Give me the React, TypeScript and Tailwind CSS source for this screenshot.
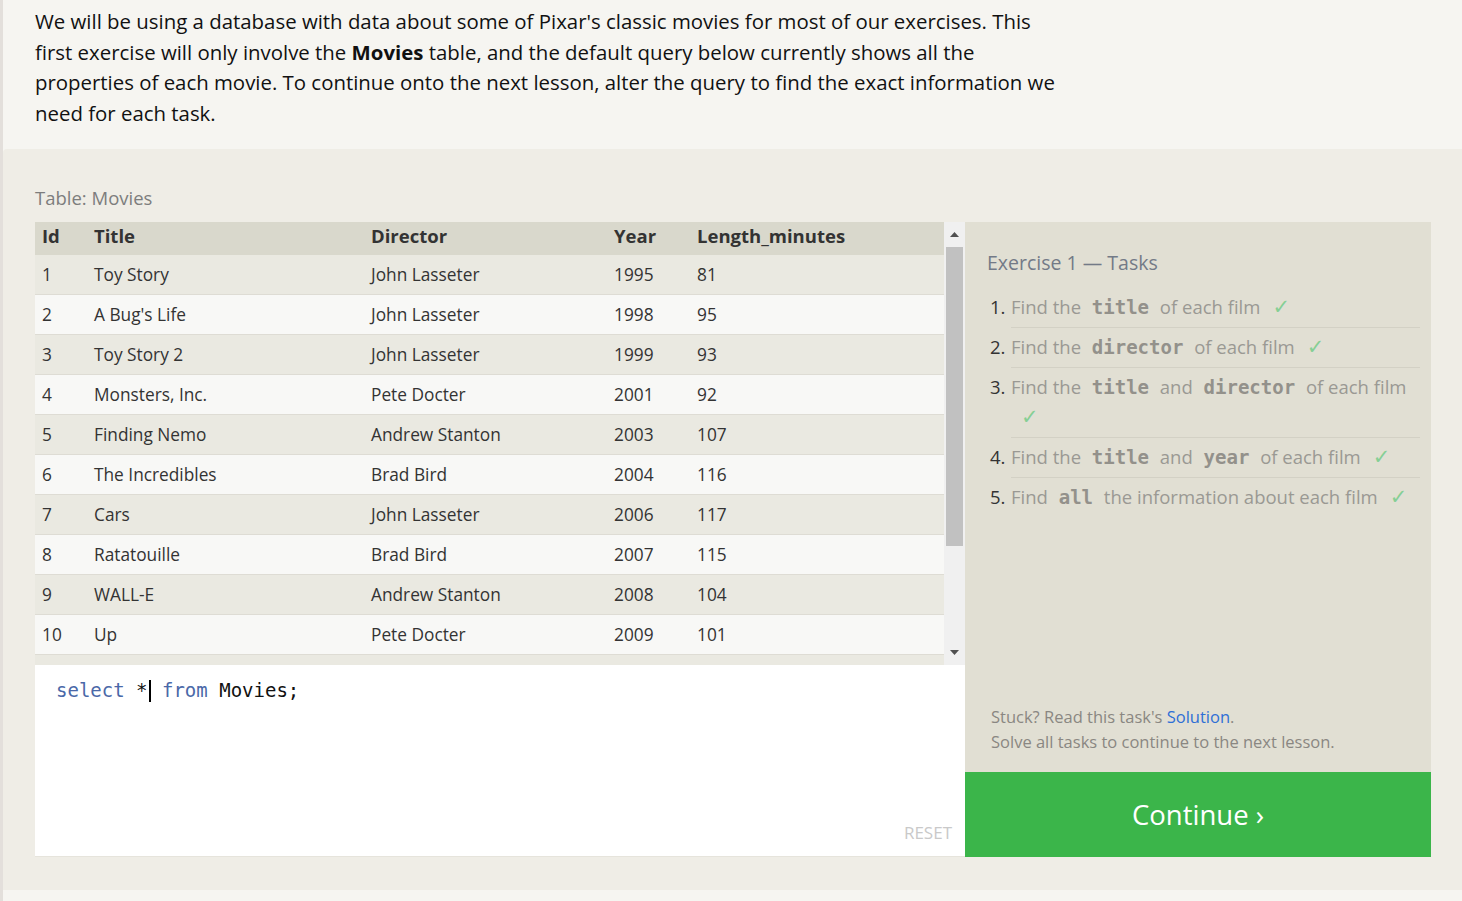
import React from "react"

const movies = [
  [1, "Toy Story", "John Lasseter", 1995, 81],
  [2, "A Bug's Life", "John Lasseter", 1998, 95],
  [3, "Toy Story 2", "John Lasseter", 1999, 93],
  [4, "Monsters, Inc.", "Pete Docter", 2001, 92],
  [5, "Finding Nemo", "Andrew Stanton", 2003, 107],
  [6, "The Incredibles", "Brad Bird", 2004, 116],
  [7, "Cars", "John Lasseter", 2006, 117],
  [8, "Ratatouille", "Brad Bird", 2007, 115],
  [9, "WALL-E", "Andrew Stanton", 2008, 104],
  [10, "Up", "Pete Docter", 2009, 101],
]

const sans = "font-['Open_Sans','Noto_Sans',sans-serif]"
const mono = "font-['DejaVu_Sans_Mono','Liberation_Mono',monospace]"

function Code({ children }: { children: React.ReactNode }) {
  return <span className={`${mono} font-bold text-[#93918b] text-[19px] mx-[6px]`}>{children}</span>
}

function Check() {
  return <span className="font-['DejaVu_Sans',sans-serif] text-[21px] text-[#86cf95] ml-[12px]">✓</span>
}

function Task({ n, children, last }: { n: number; children: React.ReactNode; last?: boolean }) {
  return (
    <li className="flex">
      <span className="w-[21px] shrink-0 text-[#333]">{n}.</span>
      <div className={`flex-1 pb-[5px] mb-[4px] ${last ? "" : "border-b border-[#d3d1c5]"}`}>{children}</div>
    </li>
  )
}

export default function App() {
  return (
    <div className={`${sans} bg-[#f6f5f1] min-h-[901px] border-l-[3px] border-[#e3dfdb]`}>
      <div className="px-[32px] pt-[6px] pb-[20px] text-[20.4px] leading-[30.7px] text-[#111]">
        We will be using a database with data about some of Pixar's classic movies for most of our exercises. This
        <br />
        first exercise will only involve the <b>Movies</b> table, and the default query below currently shows all the
        <br />
        properties of each movie. To continue onto the next lesson, alter the query to find the exact information we
        <br />
        need for each task.
      </div>

      <div className="bg-[#efede6] rounded-tl-[4px] pl-[32px] pr-[31px] pt-[36px] pb-[33px]">
        <div className="text-[18.5px] text-[#7d7d7d] mb-[11px] leading-[26px]">Table: Movies</div>
        <div className="flex">
          <div className="w-[930px] flex flex-col">
            <div className="flex h-[443px] overflow-hidden">
              <div className="flex-1">
                <table className="w-full text-[17.3px] text-[#333] border-collapse">
                  <thead>
                    <tr className="bg-[#d9d8cc] h-[33px] text-left text-[18.5px]">
                      <th className="pl-[7px] pb-[5px] w-[59px] font-bold">Id</th>
                      <th className="pb-[5px] w-[277px] font-bold">Title</th>
                      <th className="pb-[5px] w-[243px] font-bold">Director</th>
                      <th className="pb-[5px] w-[83px] font-bold">Year</th>
                      <th className="pb-[5px] font-bold">Length_minutes</th>
                    </tr>
                  </thead>
                  <tbody>
                    {movies.map((m, i) => (
                      <tr
                        key={i}
                        className={`h-[40px] border-b border-[#dedcd4] ${i % 2 === 0 ? "bg-[#eae9e1]" : "bg-[#f8f8f6]"}`}
                      >
                        <td className="pl-[7px]">{m[0]}</td>
                        <td>{m[1]}</td>
                        <td>{m[2]}</td>
                        <td>{m[3]}</td>
                        <td>{m[4]}</td>
                      </tr>
                    ))}
                    <tr className="h-[40px] bg-[#eae9e1]">
                      <td colSpan={5}></td>
                    </tr>
                  </tbody>
                </table>
              </div>
              <div className="w-[21px] bg-[#f0f0f0] flex flex-col items-center">
                <div className="h-[25px] flex items-center justify-center">
                  <svg width="9" height="5" viewBox="0 0 9 5">
                    <path d="M0 5 L4.5 0 L9 5 Z" fill="#505050" />
                  </svg>
                </div>
                <div className="w-[17px] h-[299px] bg-[#c1c1c1]"></div>
                <div className="flex-1"></div>
                <div className="h-[24px] flex items-center justify-center">
                  <svg width="9" height="5" viewBox="0 0 9 5">
                    <path d="M0 0 L4.5 5 L9 0 Z" fill="#505050" />
                  </svg>
                </div>
              </div>
            </div>
            <div className="bg-white h-[192px] flex flex-col px-[21px] pt-[12px] pb-[10px] border-b border-[#e6e4dc]">
              <div className={`${mono} text-[19px] text-[#111] leading-[26px]`}>
                <span className="text-[#4a68a8]">select</span> *
                <span className="inline-block w-[2px] h-[22px] bg-black align-middle ml-[1px]"></span>{" "}
                <span className="text-[#4a68a8]">from</span> Movies;
              </div>
              <div className="flex-1"></div>
              <div className="text-right text-[17px] text-[#c9c9c9] -mr-[8px]">RESET</div>
            </div>
          </div>

          <div className="w-[466px] flex flex-col">
            <div className="flex-1 bg-[#e1dfd3] pl-[22px] pr-[11px] pt-[26px] flex flex-col">
              <div className="text-[19.5px] text-[#737a87] mb-[15px]">Exercise 1 — Tasks</div>
              <ol className="text-[18.5px] text-[#9a9993] leading-[30px] pl-[3px]">
                <Task n={1}>
                  Find the <Code>title</Code> of each film
                  <Check />
                </Task>
                <Task n={2}>
                  Find the <Code>director</Code> of each film
                  <Check />
                </Task>
                <Task n={3}>
                  Find the <Code>title</Code> and <Code>director</Code> of each film
                  <br />
                  <span className="inline-block ml-[-2px]">
                    <Check />
                  </span>
                </Task>
                <Task n={4}>
                  Find the <Code>title</Code> and <Code>year</Code> of each film
                  <Check />
                </Task>
                <Task n={5} last>
                  Find <Code>all</Code> the information about each film
                  <Check />
                </Task>
              </ol>
              <div className="flex-1"></div>
              <div className="text-[16.5px] text-[#8a8782] leading-[25px] pl-[4px] pb-[18px]">
                Stuck? Read this task's <span className="text-[#2f6fd6]">Solution</span>.
                <br />
                Solve all tasks to continue to the next lesson.
              </div>
            </div>
            <div className="h-[85px] bg-[#3bb54a] flex items-center justify-center text-white text-[27.5px]">
              Continue ›
            </div>
          </div>
        </div>
      </div>
    </div>
  )
}
